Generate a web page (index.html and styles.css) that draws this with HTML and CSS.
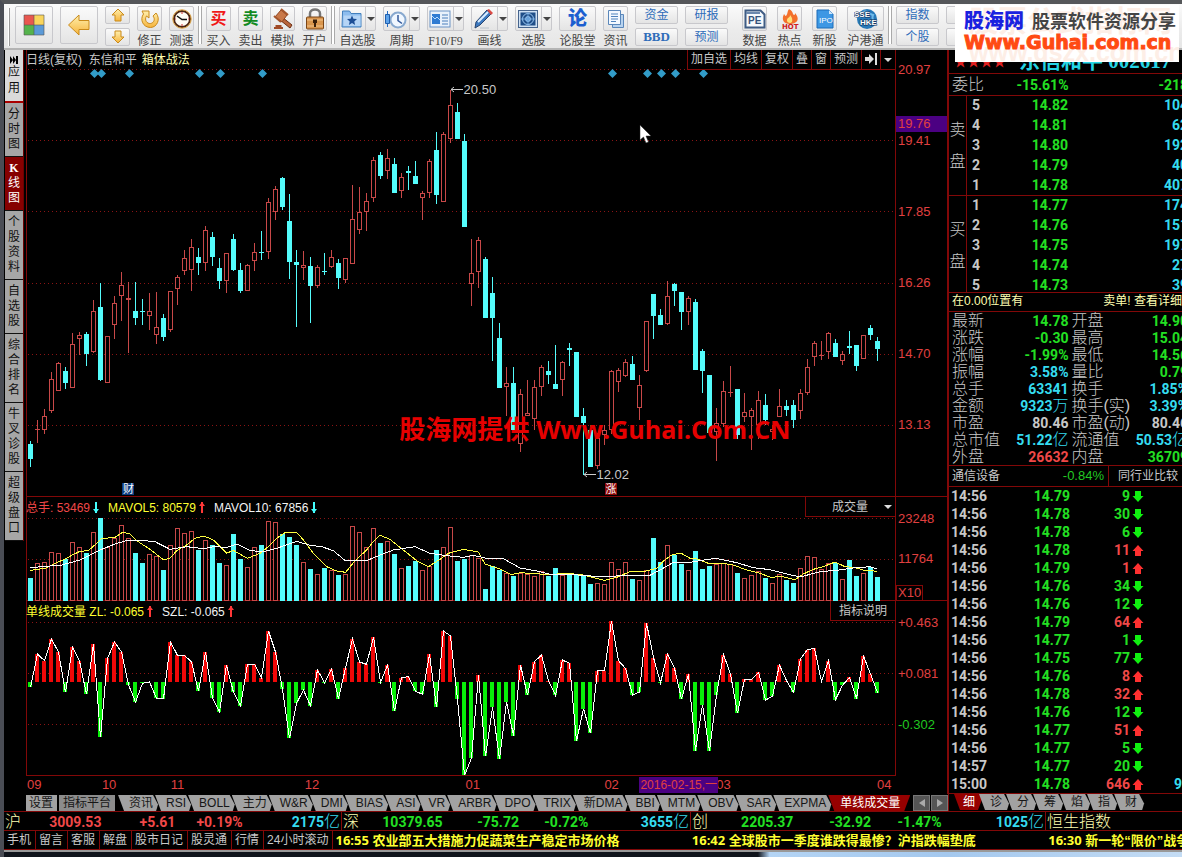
FILE: index.html
```html
<!DOCTYPE html>
<html lang="zh-CN">
<head>
<meta charset="utf-8">
<title>东信和平 002617</title>
<link rel="stylesheet" href="styles.css">
</head>
<body>
<header class="toolbar">
  <span class="handle"></span>
  <button class="big" aria-label="首页"><svg width="22" height="22" viewBox="0 0 22 22"><path fill="#e8574f" d="M1 1h10v10H1z"/><path fill="#f9d55c" d="M11 1h10v10H11z"/><path fill="#55b34c" d="M1 11h10v10H1z"/><path fill="#5b9ad8" d="M11 11h10v10H11z"/><path fill="none" stroke="#555" stroke-opacity=".6" d="M1 1h20v20H1zM11 1v20M1 11h20"/></svg></button>
  <button class="big" aria-label="后退"><svg width="24" height="22" viewBox="0 0 24 22"><path d="M1.500 11L12 1v5.500h10v9H12V21z" fill="url(#gold)" stroke="#c98a1b"/></svg></button>
  <span class="stack narrow">
    <button aria-label="上一个"><svg width="14" height="14" viewBox="0 0 14 14"><path d="M7 1l6 6h-3v6H4V7H1z" fill="url(#gold)" stroke="#c98a1b"/></svg></button>
    <button aria-label="下一个"><svg width="14" height="14" viewBox="0 0 14 14"><path d="M7 13l6-6h-3V1H4v6H1z" fill="url(#gold)" stroke="#c98a1b"/></svg></button>
  </span>
  <button class="tool"><span class="box"><svg width="20" height="20" viewBox="0 0 20 20"><path d="M2 2h7v7L6.500 7C4 11 7 15 10.500 14.500 14 14 15.500 10 13 7l3-3c5 6 1 14.500-5.500 14.500C3 18.500-.5 10.500 3.500 5z" fill="url(#gold)" stroke="#c98a1b"/></svg></span>修正</button>
  <button class="tool"><span class="box"><svg width="20" height="20" viewBox="0 0 20 20"><circle cx="10" cy="10" r="8" fill="#fffdf6" stroke="#4a2413" stroke-width="2"/><circle cx="10" cy="10" r="9.200" fill="none" stroke="#d79a35"/><path d="M5 7l5 3.500h5" fill="none" stroke="#111" stroke-width="1.500"/><path d="M10 3v2M10 15v2M3 10h1M16 10h1" stroke="#c33"/></svg></span>测速</button>
  <span class="sep"></span>
  <button class="tool"><span class="box glyph buy">买</span>买入</button>
  <button class="tool"><span class="box glyph sell">卖</span>卖出</button>
  <button class="tool"><span class="box"><svg width="22" height="22" viewBox="0 0 22 22"><path d="M10 9l10 8-2 3-10-8z" fill="#b8643a" stroke="#6e3015"/><path d="M9 2l6 5-5 7-7-5z" fill="#c97848" stroke="#8e4420"/><path d="M9 1l7 6M2 8l7 6" stroke="#a4552c" stroke-width="2"/><path d="M2 20h9M3.500 18h6" stroke="#a04a26" stroke-width="2"/></svg></span>模拟</button>
  <button class="tool"><span class="box"><svg width="22" height="23" viewBox="0 0 22 23"><path d="M6 11V6.500C6 1 16 1 16 6.500V11" fill="none" stroke="#777" stroke-width="2.500"/><rect x="2.500" y="10" width="17" height="12" rx="1" fill="#d9964e" stroke="#7a4516"/><path d="M3 13h16M3 19h16" stroke="#f2c58c"/><path d="M9 12.500h4v3.500h-1v4h-2v-4H9z" fill="#3a1f0a"/></svg></span>开户</button>
  <span class="sep"></span>
  <button class="tool drop"><span class="box"><svg width="22" height="20" viewBox="0 0 22 20"><path d="M1.500 4V2h7l1.500 2.500h10V18h-19z" fill="#8dbdee" stroke="#4380bd"/><path d="M2.500 6.500h17V17h-17z" fill="#b5d5f6"/><path d="M11 6.500l1.400 3.300 3.600.3-2.700 2.300.8 3.500-3.100-1.900-3.100 1.900.8-3.500L6 10.100l3.600-.3z" fill="#1d4f96"/></svg></span>自选股</button>
  <button class="tool drop"><span class="box"><svg width="22" height="20" viewBox="0 0 22 20"><circle cx="13" cy="11" r="7.500" fill="#f0f7ff" stroke="#88a9cf" stroke-width="2"/><path d="M13 6v5.500l4 3" fill="none" stroke="#335a9b" stroke-width="1.500"/><path d="M2.500 2v16" stroke="#246bc4"/><path d="M.5 5.500h4v9h-4z" fill="#5ea3ea" stroke="#1f5fae"/></svg></span>周期</button>
  <button class="tool drop"><span class="box"><svg width="22" height="20" viewBox="0 0 22 20"><rect x="1" y="2" width="20" height="16" fill="#e8f1fb" stroke="#6a93c6"/><rect x="3" y="5" width="8" height="10" fill="#2f7bd2"/><path d="M3 7l3 3 2-2 3 3" stroke="#b6dcff" fill="none"/><path d="M13 6h6M13 9h6M13 12h6M13 15h6" stroke="#4b7fbb"/></svg></span><span class="latin">F10/F9</span></button>
  <button class="tool drop"><span class="box"><svg width="22" height="22" viewBox="0 0 22 22"><path d="M3 14L14 2l4 4L7 17l-5 3z" fill="#3c79c0" stroke="#26436f"/><path d="M5 14L15 4" stroke="#dceeff" stroke-width="2"/><path d="M14 2l2-1 4 4-2 2z" fill="#db4a45"/><path d="M7 20h9" stroke="#9ab" stroke-opacity=".6"/></svg></span>画线</button>
  <button class="tool drop"><span class="box"><svg width="22" height="20" viewBox="0 0 22 20"><rect x="1.500" y="1.500" width="19" height="17" fill="#cfe1f4" stroke="#46648d"/><rect x="3.500" y="3.500" width="15" height="13" fill="#1f4e88"/><circle cx="11" cy="10" r="5.500" fill="none" stroke="#9cc8f2"/><circle cx="11" cy="10" r="2.500" fill="#5e9bd8" stroke="#9cc8f2"/><path d="M11 3.500v13M4 10h14" stroke="#6fa5dc"/></svg></span>选股</button>
  <button class="tool"><span class="box wide glyph talk">论</span>论股堂</button>
  <button class="tool"><span class="box"><svg width="20" height="20" viewBox="0 0 20 20"><path d="M6.500 5.500h11v13h-11z" fill="#b8d3ef" stroke="#5a87ba"/><path d="M2.500 1.500h12v14h-12z" fill="#f2f8ff" stroke="#5a87ba"/><path d="M5 5h7M5 7.500h7M5 10h7M5 12.500h5" stroke="#4f83bd"/></svg></span>资讯</button>
  <span class="stack"><button>资金</button><button class="bbd">BBD</button></span>
  <span class="stack"><button>研报</button><button>预测</button></span>
  <div class="group">
    <button class="tool"><span class="box"><svg width="22" height="20" viewBox="0 0 22 20"><path d="M1.500 1.500h15l4 4v13h-19z" fill="#f7fafd" stroke="#3f5c84" stroke-width="2"/><path d="M2 4h14" stroke="#6b88ad" stroke-width="2"/><text x="4" y="15" class="ico-text">PE</text></svg></span>数据</button>
    <button class="tool"><span class="box"><svg width="22" height="22" viewBox="0 0 22 22"><path d="M10 1c5 3 3 5 5 6 1 0 1-1 1-2 6 7 1 11-5 11S2 12 5 6c1 1 1 2 2 2 2-2 1-5 3-7z" fill="#f3702b"/><path d="M11 7c3 3 3 8 0 8s-4-3-2-5c1-1 2-1 2-3z" fill="#ffe07a"/><text x="3" y="21" class="hot-text">HOT</text></svg></span>热点</button>
    <button class="tool"><span class="box"><svg width="18" height="20" viewBox="0 0 18 20"><path d="M1 1h12l4 4v14H1z" fill="#3d97e4" stroke="#1c6db8"/><path d="M13 1v4h4" fill="#cde6fb"/><text x="3" y="14" class="ipo-text">IPO</text></svg></span>新股</button>
    <button class="tool"><span class="box wide"><svg width="24" height="22" viewBox="0 0 24 22"><circle cx="13" cy="11" r="10" fill="#2779b9"/><path d="M7 5c5-4 8 1 12 2-2 4 2 6-1 10" fill="none" stroke="#6fb9e8" stroke-width="2"/><text x="0" y="9" class="sse-text">SSE</text><text x="6" y="17" class="sse-text">HKE</text></svg></span>沪港通</button>
  </div>
  <span class="sep"></span>
  <span class="stack"><button>指数</button><button>个股</button></span>
  <span class="stack"><button aria-label="板块"></button><button aria-label="期货"></button></span>
  <svg width="0" height="0"><defs><linearGradient id="gold" x2="0" y2="1"><stop offset="0" stop-color="#fff0ae"/><stop offset="1" stop-color="#f6b43c"/></linearGradient></defs></svg>
</header>

<main class="middle">
  <nav class="side">
    <button class="light"><svg width="8" height="8" viewBox="0 0 8 8"><path d="M0 0l3 4-3 4zM3 0l3 4-3 4z"/><path d="M6 0h2v8H6z"/></svg><span>应</span><span>用</span></button>
    <button><span>分</span><span>时</span><span>图</span></button>
    <button class="on"><span>K</span><span>线</span><span>图</span></button>
    <button><span>个</span><span>股</span><span>资</span><span>料</span></button>
    <button><span>自</span><span>选</span><span>股</span></button>
    <button><span>综</span><span>合</span><span>排</span><span>名</span></button>
    <button><span>牛</span><span>叉</span><span>诊</span><span>股</span></button>
    <button><span>超</span><span>级</span><span>盘</span><span>口</span></button>
  </nav>

  <section class="center">
    <div class="charts">
      <div class="panel">
        <div class="plot">
          <svg id="candleChart" viewBox="26 50 870 447" preserveAspectRatio="none"></svg>
          <div class="readout"><span>日线(复权)&nbsp; 东信和平</span><span class="cream">箱体战法</span></div>
          <div class="modes"><button>加自选</button><button>均线</button><button>复权</button><button>叠</button><button>窗</button><button>预测</button><button aria-label="移到最后"><svg width="12" height="12" viewBox="0 0 12 12"><path fill="#ddd" d="M0 4h4V1l5 5-5 5V8H0zM10 0h2v12h-2z"/></svg></button><button class="last" aria-label="更多"><i class="tri"></i></button></div>
          <span class="mark peak">20.50</span>
          <span class="mark trough">12.02</span>
          <span class="event cai">财</span>
          <span class="event zhang">涨</span>
          <strong class="watermark">股海网提供 <span>Www.Guhai.Com.CN</span></strong>
          <svg class="cursor" width="13" height="20" viewBox="0 0 13 20"><path d="M1 1v15l3.500-3 2.500 6 2.500-1-2.500-6h5z" fill="#fff" stroke="#222" stroke-width=".5"/></svg>
        </div>
        <div class="scale" id="priceScale"></div>
      </div>
      <div class="panel">
        <div class="plot">
          <svg id="volumeChart" viewBox="26 497 870 104" preserveAspectRatio="none"></svg>
          <div class="readout"><span class="red">总手: 53469<i class="arr down cy"></i></span><span class="yellow">MAVOL5: 80579<i class="arr up"></i></span><span class="white">MAVOL10: 67856<i class="arr down cy"></i></span></div>
          <button class="pick vol">成交量<i class="tri"></i></button>
        </div>
        <div class="scale" id="volumeScale"><span class="unit">X10</span></div>
      </div>
      <div class="panel">
        <div class="plot">
          <svg id="oscChart" viewBox="26 601 870 175" preserveAspectRatio="none"></svg>
          <div class="readout"><span class="yellow">单线成交量 ZL: -0.065<i class="arr up"></i></span><span class="white">SZL: -0.065<i class="arr up"></i></span></div>
          <button class="pick">指标说明</button>
        </div>
        <div class="scale" id="oscScale"></div>
      </div>
    </div>
    <div class="dates" id="dates"><span class="today">2016-02-15,一</span></div>
    <nav class="tabs">
      <button class="flat">设置</button><button class="flat">指标平台</button>
      <button>资讯</button><button>RSI</button><button>BOLL</button><button>主力</button><button>W&amp;R</button><button>DMI</button><button>BIAS</button><button>ASI</button><button>VR</button><button>ARBR</button><button>DPO</button><button>TRIX</button><button>新DMA</button><button>BBI</button><button>MTM</button><button>OBV</button><button>SAR</button><button>EXPMA</button><button class="on">单线成交量</button>
      <span class="pager"><button aria-label="向左"><i class="lt"></i></button><button aria-label="向右"><i class="rt"></i></button></span>
    </nav>
  </section>

  <aside class="quote">
    <h1><span class="stars">★★★★</span><span class="name">东信和平 002617</span></h1>
    <div class="ratio"><span>委比</span><b class="g">-15.61%</b><b class="g">-218</b></div>
    <table class="book asks"><tbody>
      <tr><th rowspan="5">卖<br>盘</th><td>5</td><td>14.82</td><td>104</td></tr>
      <tr><td>4</td><td>14.81</td><td>62</td></tr>
      <tr><td>3</td><td>14.80</td><td>192</td></tr>
      <tr><td>2</td><td>14.79</td><td>40</td></tr>
      <tr><td>1</td><td>14.78</td><td>407</td></tr>
    </tbody></table>
    <table class="book bids"><tbody>
      <tr><th rowspan="5">买<br>盘</th><td>1</td><td>14.77</td><td>174</td></tr>
      <tr><td>2</td><td>14.76</td><td>151</td></tr>
      <tr><td>3</td><td>14.75</td><td>197</td></tr>
      <tr><td>4</td><td>14.74</td><td>27</td></tr>
      <tr><td>5</td><td>14.73</td><td>39</td></tr>
    </tbody></table>
    <div class="notice"><span>在0.00位置有</span><span>卖单! 查看详细</span></div>
    <table class="stats"><tbody>
      <tr><th>最新</th><td class="g">14.78</td><th>开盘</th><td class="g">14.90</td></tr>
      <tr><th>涨跌</th><td class="g">-0.30</td><th>最高</th><td class="g">15.04</td></tr>
      <tr><th>涨幅</th><td class="g">-1.99%</td><th>最低</th><td class="g">14.56</td></tr>
      <tr><th>振幅</th><td class="c">3.58%</td><th>量比</th><td class="g">0.79</td></tr>
      <tr><th>总手</th><td class="c">63341</td><th>换手</th><td class="c">1.85%</td></tr>
      <tr><th>金额</th><td class="c">9323<u>万</u></td><th>换手(实)</th><td class="c">3.39%</td></tr>
      <tr><th>市盈</th><td>80.46</td><th>市盈(动)</th><td>80.46</td></tr>
      <tr><th>总市值</th><td class="c">51.22<u>亿</u></td><th>流通值</th><td class="c">50.53<u>亿</u></td></tr>
      <tr><th>外盘</th><td class="r">26632</td><th>内盘</th><td class="g">36709</td></tr>
    </tbody></table>
    <div class="sector"><span>通信设备</span><span class="pct">-0.84%</span><a href="#peers">同行业比较</a></div>
    <table class="ticks"><tbody id="tickRows"></tbody></table>
    <nav class="tabs"><button class="on">细</button><button>诊</button><button>分</button><button>筹</button><button>焰</button><button>指</button><button>财</button></nav>
  </aside>
</main>

<section class="indices">
  <div class="index"><span>沪</span><b class="r">3009.53</b><b class="r">+5.61</b><b class="r">+0.19%</b><b class="c">2175<u>亿</u></b></div>
  <div class="index"><span>深</span><b class="g">10379.65</b><b class="g">-75.72</b><b class="g">-0.72%</b><b class="c">3655<u>亿</u></b></div>
  <div class="index"><span>创</span><b class="g">2205.37</b><b class="g">-32.92</b><b class="g">-1.47%</b><b class="c">1025<u>亿</u></b></div>
  <div class="index"><span>恒生指数</span></div>
</section>
<footer class="news">
  <nav><a href="#m">手机</a><a href="#l">留言</a><a href="#k">客服</a><a href="#j">解盘</a><a href="#d">股市日记</a><a href="#t">股灵通</a><a href="#h">行情</a><a href="#g">24小时滚动</a></nav>
  <div class="feed"><p><b>16:55</b> 农业部五大措施力促蔬菜生产稳定市场价格</p><p><b>16:42</b> 全球股市一季度谁跌得最惨？沪指跌幅垫底</p><p><b>16:30</b> 新一轮“限价”战争</p></div>
</footer>
<div class="desk"></div>

<div class="brand">
  <span class="ghost">股票公式指标网</span>
  <span class="ghost low">www.gszx.com.cn</span>
  <div class="brand-row"><strong>股海网</strong><em>股票软件资源分享</em></div>
  <strong class="site">Www.Guhai.com.cn</strong>
</div>
<script src="charts.js"></script>
</body>
</html>
```
FILE: styles.css
```css
* { box-sizing: border-box; }
body {
  margin: 0; height: 100vh; overflow: hidden; position: relative;
  display: flex; flex-direction: column;
  background: #000; color: #c8c8c8;
  font: 12px/16px "Liberation Sans", "Noto Sans CJK SC", sans-serif;
  border-left: 4px solid #4a4d55; border-top: 4px solid #55575a;
}
button {
  font: inherit; color: inherit; background: none; border: 0; padding: 0; margin: 0;
  display: flex; align-items: center; justify-content: center; white-space: nowrap; flex: none;
}
a { color: inherit; text-decoration: none; }
i, em, u { font-style: normal; text-decoration: none; }
u { font-weight: 300; font-size: 16px; line-height: 1; }
table { border-collapse: collapse; }
th { font-weight: 300; }
td, b { font-family: Roboto, "Noto Sans CJK SC", sans-serif; font-weight: 700; font-size: 14px; }
.r, .red { color: #f04848; }
.g { color: #23e023; }
.c { color: #35dcf0; }
.yellow { color: #ffff30; }
.white { color: #f4f4f4; }
.cream { color: #ffffb0; }

/* toolbar */
.toolbar {
  height: 46px; flex: none; display: flex; gap: 7px; padding: 2px 0 0 4px; align-items: flex-start;
  background: linear-gradient(#fbfbfb, #ebebeb 60%, #e6e6e6); border-bottom: 2px solid #b4b4b4; color: #444;
}
.handle { width: 2px; height: 38px; margin-top: 2px; margin-right: -2px; border-right: 1px solid #999; background: #fff; }
.sep { width: 4px; height: 38px; margin: 0 -3px 0 -3px; border: solid #aaa; border-width: 0 1px; background: #fff; }
.big, .stack button, .box {
  border: 1px solid #c8c8cc; border-radius: 2px; background: linear-gradient(#fafafa, #e4e4e4);
}
.big { width: 38px; height: 38px; }
.stack { display: flex; flex-direction: column; gap: 4px; width: 43px; flex: none; color: #2f6dba; }
.stack.narrow { width: 25px; }
.stack button { height: 18px; }
.stack .bbd { font: bold 13px "Liberation Serif", serif; }
.tool { flex-direction: column; line-height: 14px; gap: 3px; }
.latin { font-family: "Liberation Serif", serif; }
.box { display: flex; align-items: center; justify-content: center; width: 25px; height: 25px; }
.box.wide { width: 37px; }
.drop .box { width: 37px; justify-content: flex-start; padding-left: 1px; gap: 3px; background: linear-gradient(90deg, transparent 25px, #c8c8cc 25px 26px, transparent 26px), linear-gradient(#fafafa, #e4e4e4); }
.drop .box::after { content: ""; border: solid transparent; border-width: 4px 4px 0; border-top-color: #444; margin-left: 1px; }
.glyph { font-size: 16px; font-weight: 700; }
.buy { color: #f01818; }
.sell { color: #128a22; }
.talk { color: #1c5fd0; font-size: 19px; font-weight: 900; }
.group { display: flex; gap: 10px; margin: 0 0 0 7px; }
.ico-text { font: bold 10px "Liberation Sans", sans-serif; fill: #35537c; }
.hot-text { font: bold 7px "DejaVu Sans", sans-serif; fill: #cf2020; }
.ipo-text { font: 8px "Liberation Sans", sans-serif; fill: #fff; }
.sse-text { font: bold 8px "Liberation Sans", sans-serif; fill: #fff; stroke: #0b2d57; stroke-width: 1px; paint-order: stroke; }

/* main area */
.middle { flex: 1; min-height: 0; display: grid; grid-template-columns: 22px 1fr 234px; }
.side { width: 20px; padding-left: 1px; border-right: 1px solid #6b0000; align-self: start; }
.side button {
  width: 100%; flex-direction: column; padding: 4px 0; border-bottom: 1px solid #111;
  background: #a6a6a6; color: #111; line-height: 15px;
}
.side button span { display: block; height: 15px; }
.side .light { background: #dadada; padding: 6px 0 5px; gap: 1px; border-bottom: 2px solid #a00; }
.side .on { background: #860000; color: #fff; }
.side .on span:first-child { font: bold 12px/15px "Liberation Serif", serif; }
.center { display: grid; grid-template-rows: 1fr 18px 17px; min-width: 0; min-height: 0; }
.charts { display: grid; grid-template-rows: 447fr 104fr 175fr; min-height: 0; }
.panel { display: grid; grid-template-columns: 1fr 52px; min-height: 0; border-bottom: 1px solid #820808; }
.panel:last-child { border-bottom: 0; }
.plot { position: relative; min-width: 0; min-height: 0; border: solid #820808; border-width: 0 1px; }
.panel:last-child .plot { border-bottom: 1px solid #820808; }
.plot > svg:first-child { position: absolute; left: -1px; top: 0; width: calc(100% + 2px); height: calc(100% + 1px); display: block; }
.readout { position: absolute; top: 2px; left: -1px; display: flex; gap: 5px; white-space: nowrap; }
.panel + .panel .readout { gap: 9px; top: 3px; }
.arr { display: inline-block; position: relative; width: 6px; height: 11px; margin-left: 3px; vertical-align: -1px; background: linear-gradient(90deg, transparent 2px, currentColor 2px 4px, transparent 4px); color: #ff3838; }
.arr::before { content: ""; position: absolute; left: 0; border: 3px solid transparent; }
.up::before { top: -3px; border-bottom: 4px solid currentColor; }
.down::before { bottom: -3px; border-top: 4px solid currentColor; }
.cy { color: #4ff; }
.modes { position: absolute; top: 0; right: 0; display: flex; height: 20px; border-bottom: 1px solid #820808; background: #000; }
.modes button { border-left: 1px solid #820808; padding: 0 3px 2px; }
.modes .last { padding: 0 3px; }
.tri { display: inline-block; border: solid transparent; border-width: 4px 4px 0; border-top-color: #ddd; }
.pick { position: absolute; right: 0; top: 0; height: 20px; padding: 0 8px; border: solid #820808; border-width: 0 0 1px 1px; background: #000; }
.pick.vol { padding: 0 3px 0 26px; gap: 16px; }
.mark { position: absolute; font-size: 13px; line-height: 16px; }
.peak { left: 50.3%; top: 7.2%; }
.trough { left: 65.6%; top: 93.4%; }
.event { position: absolute; top: 97%; width: 12px; height: 12px; line-height: 12px; font-size: 11px; color: #fff; text-align: center; }
.cai { left: 11%; background: #0c3c80; }
.zhang { left: 66.6%; background: #8c0808; }
.watermark { position: absolute; left: 42.9%; top: 81.2%; white-space: nowrap; color: #e60000; font: bold 26px/34px "Open Sans", "Noto Sans CJK SC", sans-serif; }
.watermark span { font-size: 25px; }
.cursor { position: absolute; left: 70.5%; top: 16.6%; }
.scale { position: relative; border-right: 1px solid #820808; color: #e04040; font-size: 13px; line-height: 16px; }
.scale span { position: absolute; left: 2px; transform: translateY(-50%); }
.scale .neg { color: #20c820; }
.scale .now { left: 0; width: 100%; padding-left: 2px; background: #4b0082; }
.scale .unit { left: 0; top: 93%; padding: 0 1px; line-height: 14px; border: 1px solid #820808; }
.dates { position: relative; color: #e04040; font-size: 13px; line-height: 18px; border-right: 1px solid #820808; }
.dates span { position: absolute; white-space: nowrap; }
.dates .today { left: 66.6%; z-index: 1; background: #4b0082; font-size: 12px; line-height: 16px; top: 1px; padding: 0 1px; }

/* slanted tabs */
.tabs { display: flex; height: 16px; flex: none; margin-top: 1px; min-width: 0; overflow: hidden; color: #161616; }
.tabs > button {
  background: #a2a2a2; height: 16px; padding: 0 7px 0 11px; margin-left: -5px;
  clip-path: polygon(0 0, calc(100% - 7px) 0, calc(100% - 2px) 60%, calc(100% - 4px) 100%, 6px 100%);
}
.tabs .flat { clip-path: none; padding: 0 4px; margin: 0 2px 0 0; background: #8c8c8c; }
.tabs .flat + button:not(.flat) { margin-left: 1px; }
.tabs .flat:first-child { background: #a2a2a2; margin-left: -1px; }
.tabs .on { background: #960000; color: #fff; clip-path: polygon(0 0, 100% 0, calc(100% - 6px) 100%, 6px 100%); }
.center .tabs .on { padding: 0 10px 0 12px; }
.pager { display: flex; gap: 1px; margin-left: auto; }
.pager button { width: 17px; background: #555; border: 1px solid #777; }
.lt, .rt { border: 4px solid transparent; }
.lt { border-right: 6px solid #aaa; border-left: 0; }
.rt { border-left: 6px solid #aaa; border-right: 0; }

/* quote panel */
.quote { overflow: hidden; min-width: 0; border-left: 1px solid #820808; display: flex; flex-direction: column; }
.quote h1 { margin: 0; height: 23px; flex: none; display: flex; gap: 13px; padding-left: 5px; overflow: hidden; line-height: 23px; white-space: nowrap; font-weight: 400; }
.stars { font-size: 13px; color: #e02020; }
.name { font: bold 21px/23px "Liberation Serif", "Noto Sans CJK SC", serif; color: #25d5e5; }
.ratio, .notice, .sector { flex: none; border-top: 1px solid #820808; display: flex; margin-right: -6px; padding-left: 3px; white-space: nowrap; }
.ratio { height: 22px; line-height: 22px; }
.ratio span { font-size: 16px; font-weight: 300; width: 48px; }
.ratio b { width: 69px; text-align: right; }
.ratio b:last-child { width: 120px; }
.book { width: calc(100% + 6px); flex: none; margin: 0 -6px -1px 0; table-layout: fixed; border-top: 1px solid #820808; border-collapse: separate; border-spacing: 0; }
.bids { margin-bottom: -4px; }
.book td { height: 20px; padding: 0; line-height: 18px; vertical-align: top; color: #35dcf0; text-align: right; }
.book th { width: 18px; padding: 0; border-right: 1px solid #820808; font-size: 16px; line-height: 32px; }
.book th + td, .book td:first-child { width: 18px; text-align: center; color: #c8c8c8; }
.book td:nth-last-child(2) { width: 83px; color: #23e023; }
.notice { height: 19px; line-height: 17px; justify-content: space-between; color: #ffffb0; padding-right: 6px; background: #000; }
.stats { width: calc(100% + 6px); flex: none; margin-right: -6px; table-layout: fixed; border-collapse: separate; border-spacing: 0; border-top: 1px solid #820808; }
.stats td, .stats th { height: 17px; line-height: 16px; padding: 0; text-align: right; white-space: nowrap; }
.stats tr { height: 17px; }
.stats u { line-height: 0; }
.stats th { font-size: 16px; text-align: left; padding-left: 3px; width: 52px; }
.stats td { width: 67px; }
.sector { height: 21px; line-height: 20px; }
.sector span { width: 78px; }
.sector .pct { color: #23c823; width: 79px; text-align: right; padding-right: 4px; border-right: 1px solid #820808; font-size: 13px; }
.sector a { padding-left: 9px; }
.ticks { width: 100%; flex: none; table-layout: fixed; border-collapse: separate; border-spacing: 0; border-top: 1px solid #820808; border-bottom: 1px solid #820808; }
.ticks td { height: 18px; line-height: 18px; padding: 0; text-align: right; }
.ticks td:first-child { width: 38px; }
.ticks td:nth-child(2) { width: 83px; color: #23e023; }
.ticks td:nth-child(3) { width: 60px; }
.ticks td:nth-child(4) { width: 17px; }
.ticks td:nth-child(5) { text-align: left; padding-left: 27px; }
.ticks svg { display: block; margin-left: 2px; }
.quote .tabs { padding-left: 10px; margin-top: 0; }
.quote .tabs > button { padding: 0 9px 0 11px; }
.quote .tabs .on { padding: 0 9px; }

/* bottom bars */
.indices { height: 20px; flex: none; display: grid; grid-template-columns: 338fr 349fr 355fr 136fr; border: solid #820808; border-width: 1px 0; }
.index { display: grid; grid-template-columns: 29fr 22fr 20fr 29fr; position: relative; line-height: 20px; height: 18px; text-align: right; white-space: nowrap; padding-right: 1px; border-right: 1px solid #820808; min-width: 0; }
.index:last-child { border: 0; }
.index span { position: absolute; left: 1px; font-size: 16px; font-weight: 300; color: #ffffb0; line-height: 20px; }
.news { height: 19px; flex: none; display: flex; overflow: hidden; border-bottom: 1px solid #820808; }
.news nav { display: flex; flex: none; line-height: 18px; }
.news nav a { padding: 0 4px 0 3px; border-right: 1px solid #820808; }
.feed { display: flex; flex: 1; min-width: 0; color: #ffff30; font-weight: 700; font-size: 13px; line-height: 18px; }
.feed p { margin: 0; padding-left: 2px; flex: none; width: 42%; white-space: nowrap; }
.feed b { font-family: "Noto Sans", sans-serif; font-size: 13px; }
.desk { height: 7px; flex: none; border-top: 2px solid #999; background: linear-gradient(90deg, #10141c 64%, #b4d4f4 65%, #a4c8ee 80%, #c4dcf4); }

/* logo plate over the toolbar */
.brand { position: absolute; right: 3px; top: 1px; width: 224px; height: 57px; padding: 5px 0 0 9px; background: #fff; overflow: hidden; white-space: nowrap; }
.brand-row { position: relative; display: flex; align-items: center; height: 20px; }
.brand-row strong { color: #1a22e0; font: 900 20px/20px "Noto Sans CJK SC", sans-serif; width: 68px; }
.brand-row em { color: #444; font: 700 18px/20px "Noto Sans CJK SC", sans-serif; }
.site { position: relative; display: block; color: #ff4a12; font: bold 19px/24px "DejaVu Sans", sans-serif; -webkit-text-stroke: 1px #ff4a12; }
.ghost { position: absolute; left: 14px; top: 2px; color: #fdeee6; font-weight: 700; font-size: 29px; line-height: 30px; }
.ghost.low { top: 38px; font-size: 25px; line-height: 18px; }
```
FILE: charts.js
```js
const STEP = 7, X0 = 30.5;
const RED = '#c84848', CYAN = '#54fcfc';

// direction, high, low, body top, body bottom
const bars = `d441,467,444,459 u420,443,429,429 u409,434,416,430 u372,413,379,411 u362,391,363,391 d367,389,371,383 u333,388,344,388 u332,355,335,339 d332,366,334,354 u300,353,311,352
d283,381,307,380 u336,383,336,383 u296,339,303,325 u272,321,285,296 u282,353,298,300 d282,325,311,318 d299,325,311,312 u293,330,311,316 u292,344,327,335 d314,341,318,337
u291,332,291,330 u275,305,277,289 u250,275,258,271 u239,291,247,270 d248,275,257,263 u226,271,230,263 d232,266,237,257 d258,289,268,281 u253,293,253,281 d234,271,239,270
d263,293,270,291 u264,291,265,291 u243,271,252,261 d231,260,252,253 u198,259,202,252 u186,220,189,212 d177,210,178,207 d194,279,221,262 d250,327,262,265 u251,280,265,268
d257,323,266,286 u265,288,267,286 d253,275,271,272 u250,268,257,267 d259,289,263,278 u258,283,258,280 u185,264,219,264 u187,234,212,230 u193,231,201,212 u157,202,160,198
d152,179,155,176 u149,179,158,171 d158,193,164,193 u173,198,177,191 d166,190,171,173 d161,184,176,184 u191,220,193,198 u159,198,161,193 d132,204,150,195 u132,202,134,202
u90,143,105,139 d103,139,112,139 d134,227,141,227 u239,306,273,284 u237,288,240,272 d257,318,259,318 d277,361,293,318 d323,388,338,388 u367,416,383,387 d367,430,383,430
u389,452,394,444 u380,416,413,416 u380,430,387,419 u365,396,367,387 d361,384,371,375 d345,389,384,389 u361,396,362,380 d343,366,348,350 d352,417,352,417 d408,475,416,423
d425,467,430,467 u433,469,438,466 u425,445,430,435 u370,434,371,430 u368,392,370,382 u359,377,362,376 d356,380,364,380 u375,420,385,408 u321,372,321,371 d294,339,294,316
d309,325,315,325 u281,325,296,324 d283,306,284,291 d292,330,292,312 u296,325,298,312 d299,370,302,370 d349,393,351,371 d375,433,375,433 u408,461,423,432 u381,427,391,424
u366,397,392,392 d389,439,389,435 u393,422,412,417 u408,450,410,417 u391,439,400,425 d394,425,405,420 u425,440,429,432 u389,417,406,417 d400,416,406,410 d400,428,405,420
u389,419,393,411 u359,395,367,393 u341,366,343,357 u341,360,355,355 u332,359,333,352 d339,357,343,357 u351,365,354,361 d331,354,346,348 d345,371,345,366 u335,359,335,359
d325,340,328,335 d337,361,341,349`.split(/\s+/).map(s => [s[0], ...s.slice(1).split(',').map(Number)]);

// tops of the volume bars and of the oscillator, in thirds of a unit from BASE
const BASE = 490;
const vol = [264,219,216,186,189,207,156,171,189,126,84,171,144,105,145,189,219,193,198,240,165,114,129,123,180,150,165,219,225,132,207,231,171,165,93,96,132,141,165,216,237,252,234,240,255,252,108,126,171,114,159,153,192,234,228,213,240,228,180,171,111,213,207,195,205,297,228,240,249,258,249,252,258,243,258,234,255,252,252,258,282,279,282,216,237,216,267,270,240,144,216,165,195,222,240,183,237,228,222,219,222,249,264,255,243,264,279,252,270,279,234,198,201,237,219,219,267,210,258,249,231,261];
const wave = [592,492,512,447,486,607,471,513,613,462,742,505,456,486,584,636,580,576,625,626,456,496,496,516,604,486,625,666,525,607,648,522,522,563,423,486,598,745,640,600,648,540,578,537,626,534,447,516,523,441,578,525,663,563,560,604,613,492,652,423,438,628,856,804,555,799,652,808,636,737,525,616,515,495,572,616,510,520,754,656,730,543,542,393,512,535,615,606,399,503,578,492,535,627,552,782,644,784,614,494,552,670,568,568,547,631,618,525,572,607,507,479,475,575,513,629,586,562,626,498,552,608];
const ma5 = '91,241 135,235 165,220 196,207 217,195 240,184 265,182 290,160 305,146 345,142 368,127 390,132 410,152 450,178 490,209 510,205 530,182 560,165 585,145 612,138 640,150 680,190 700,181 742,205 780,190 805,170 830,145 855,128 890,127 910,150 940,190 980,230 1010,243 1037,247 1065,212 1100,180 1120,155 1140,136 1170,148 1210,180 1250,212 1285,230 1320,208 1345,190 1390,178 1435,186 1455,222 1495,235 1535,254 1560,248 1620,252 1650,255 1685,250 1740,253 1770,260 1813,271 1850,262 1890,245 1939,243 1970,235 1990,213 2015,195 2042,189 2070,205 2086,205 2130,222 2170,220 2200,225 2240,240 2280,250 2315,263 2340,258 2385,269 2410,252 2440,238 2470,230 2505,216 2535,230 2560,232 2590,240 2632,244';
const ma10 = '91,233 185,225 240,210 300,180 345,162 385,150 410,150 465,155 510,178 560,170 610,176 640,170 680,172 710,162 750,182 790,185 830,175 890,154 930,166 965,170 1000,182 1037,213 1100,212 1140,195 1180,180 1245,170 1290,190 1340,197 1390,202 1420,196 1460,205 1510,206 1560,234 1610,243 1650,253 1710,253 1760,257 1813,261 1860,257 1910,256 1950,256 1985,237 2020,217 2060,219 2100,212 2147,205 2210,218 2260,233 2310,239 2360,252 2400,261 2460,245 2510,241 2560,234 2610,230 2632,237';

const el = id => document.getElementById(id);
const third = v => BASE + v / 3;
const x = i => X0 + i * STEP;
const rect = (l, t, w, h, fill) => `<rect x="${l}" y="${t}" width="${w}" height="${h}" fill="${fill}"/>`;
const hollow = (i, t, b) => `<rect x="${x(i) - 2}" y="${t + .5}" width="4" height="${Math.max(b - t - 1, 0)}" fill="#000" stroke="${RED}"/>`;
const grid = ys => ys.map(y => `<path d="M28 ${y + .5}H896" stroke="#8a1414" stroke-dasharray="1 3"/>`).join('');
const crisp = s => `<g shape-rendering="crispEdges">${s}</g>`;
const line = (pts, color) => `<polyline points="${pts.split(' ').map(p => { const [a, b] = p.split(','); return (a / 3) + ',' + third(+b); }).join(' ')}" fill="none" stroke="${color}"/>`;

let s = grid([69, 140, 211, 283, 354, 425]);
bars.forEach(([d, hi, lo, t, b], i) => {
  const c = d === 'd' ? CYAN : RED;
  s += rect(x(i) - .5, hi, 1, lo - hi, c);
  s += d === 'd' || b - t < 3 ? rect(x(i) - 2.5, t, 5, Math.max(b - t, 1), c) : hollow(i, t, b);
});
let marks = [94.5, 101.5, 129.5, 199.5, 220.5, 262.5, 612.5, 647.5, 661.5, 675.5, 703.5]
  .map(c => `<path d="M${c - 4.5} 73.5l4.5-4.5 4.5 4.5-4.5 4.5z" fill="#329cc8"/>`).join('');
marks += '<path d="M451 89.5h12M454 87l-3 2.5 3 2.5M584 474.5h12M587 472l-3 2.500 3 2.500" fill="none" stroke="#ccc"/>';
el('candleChart').innerHTML = crisp(s) + marks;

s = grid([518, 559]);
vol.forEach((v, i) => {
  const t = Math.round(third(v));
  s += bars[i][0] === 'd' ? rect(x(i) - 2.5, t, 5, 601 - t, CYAN) : hollow(i, t, 601);
});
el('volumeChart').innerHTML = crisp(s + line(ma5, '#ffff40') + line(ma10, '#fff'));

s = grid([622, 673, 724]);
wave.forEach((v, i) => {
  const y = Math.round(third(v));
  s += y < 682 ? rect(x(i) - 2.5, y, 4, 682 - y, '#f00808') : rect(x(i) - 2.5, 682, 4, y - 682, '#08f008');
});
s += line(wave.map((v, i) => x(i) * 3 + ',' + v).join(' '), '#fff');
el('oscChart').innerHTML = crisp(s);

const label = (id, top, height, items) => {
  el(id).insertAdjacentHTML('beforeend', items.map(([y, text, cls]) =>
    `<span class="${cls || ''}" style="top:${((y - top) / height * 100).toFixed(2)}%">${text}</span>`).join(''));
};
label('priceScale', 50, 447, [[70, '20.97'], [141, '19.41'], [124, '19.76', 'now'], [212, '17.85'], [284, '16.26'], [355, '14.70'], [426, '13.13']]);
label('volumeScale', 497, 104, [[519, '23248'], [560, '11764']]);
label('oscScale', 601, 175, [[623, '+0.463'], [674, '+0.081'], [725, '-0.302', 'neg']]);

el('dates').insertAdjacentHTML('beforeend',
  [[27, '09'], [102, '10'], [171, '11'], [305, '12'], [466, '01'], [605, '02'], [717, '03'], [878, '04']]
    .map(([px, t]) => `<span style="left:${((px - 26) / 922 * 100).toFixed(2)}%">${t}</span>`).join(''));

const ticks = `14:56 14.79 9d|14:56 14.78 30d|14:56 14.78 6d|14:56 14.78 11u|14:56 14.79 1u|14:56 14.76 34d|14:56 14.76 12d|14:56 14.79 64u|14:56 14.77 1d|14:56 14.75 77d|14:56 14.76 8u|14:56 14.78 32u|14:56 14.76 12d|14:56 14.77 51u|14:56 14.77 5d|14:57 14.77 20d|15:00 14.78 646u`;
el('tickRows').innerHTML = ticks.split('|').map((row, i, all) => {
  const [time, price, v] = row.split(' ');
  const up = v.endsWith('u');
  const arrow = up ? '<path fill="#ff3030" d="M6 0l5.500 6H9v5H3V6H.5z"/>' : '<path fill="#10f010" d="M6 11l5.500-6H9V0H3v5H.5z"/>';
  return `<tr><td>${time}</td><td>${price}</td><td class="${up ? 'r' : 'g'}">${parseInt(v)}</td><td><svg width="12" height="11" viewBox="0 0 12 11">${arrow}</svg></td><td class="c">${i === all.length - 1 ? 9 : ''}</td></tr>`;
}).join('');
```
